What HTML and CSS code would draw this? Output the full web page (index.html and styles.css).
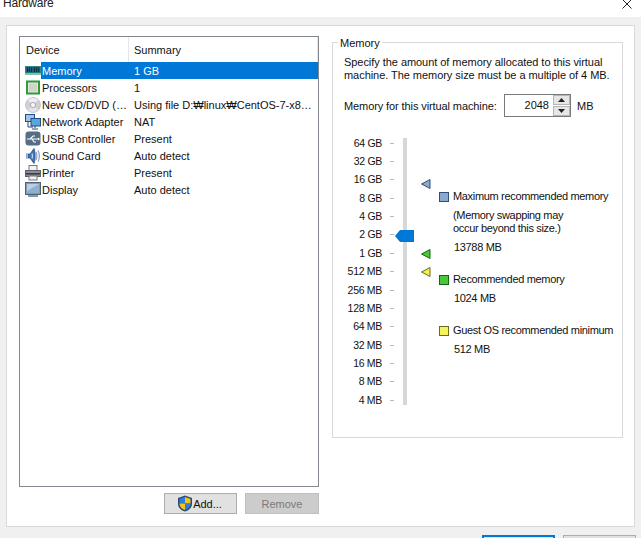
FILE: index.html
```html
<!DOCTYPE html>
<html lang="en">
<head>
<meta charset="utf-8">
<title>Hardware</title>
<link rel="stylesheet" href="styles.css">
</head>
<body>
<div class="window">
  <header class="titlebar">
    <span class="title">Hardware</span>
    <svg class="close" width="10" height="10" viewBox="0 0 10 10"><path d="M0.5 0.5L9.5 9.5M9.5 0.5L0.5 9.5" stroke="#222" stroke-width="1" fill="none"/></svg>
  </header>
  <main class="panel">
    <section class="left">
      <div class="list">
        <div class="list-head">
          <div class="col-device head-cell">Device</div>
          <div class="col-summary head-cell">Summary</div>
        </div>
        <div class="row selected">
          <svg class="ico" viewBox="0 0 16 16"><rect x="0" y="3" width="16" height="9" fill="#2f8a86"/><rect x="1" y="4" width="14" height="5.500" fill="#1d5f78"/><path d="M2.500 4.500v4.500M4.500 4.500v4.500M6.500 4.500v4.500M9.500 4.500v4.500M11.500 4.500v4.500M13.500 4.500v4.500" stroke="#0e3346" stroke-width="1"/><rect x="0" y="10" width="16" height="2" fill="#7fc0a8"/></svg>
          <span class="col-device name">Memory</span><span class="col-summary val">1 GB</span>
        </div>
        <div class="row">
          <svg class="ico" viewBox="0 0 16 16"><rect x="2" y="1.500" width="12" height="12" fill="#e6e6e0" stroke="#2f9a3a" stroke-width="2"/><rect x="4" y="3.500" width="8" height="8" fill="#d2d4ca"/></svg>
          <span class="col-device name">Processors</span><span class="col-summary val">1</span>
        </div>
        <div class="row">
          <svg class="ico" viewBox="0 0 16 16"><circle cx="8" cy="8" r="7.500" fill="#d0d0d6" stroke="#aeaeb4" stroke-width="0.6"/><path d="M8 8L3 3A7 7 0 0 1 13 3Z" fill="#eeeef2"/><path d="M8 8L13 13A7 7 0 0 1 3 13Z" fill="#e2e2e8"/><circle cx="8" cy="8" r="2.600" fill="#f6f6f6" stroke="#9a9a9e" stroke-width="0.8"/></svg>
          <span class="col-device name">New CD/DVD (…</span><span class="col-summary val">Using file D:₩linux₩CentOS-7-x8…</span>
        </div>
        <div class="row">
          <svg class="ico" viewBox="0 0 16 16"><rect x="0.500" y="0.500" width="9" height="7" fill="#9fc4e8" stroke="#1f4f86"/><rect x="6" y="4.500" width="9.500" height="7.500" fill="#5aa4e0" stroke="#1f4f86"/><path d="M3 8v5h5M10 12v2M7 15h6" stroke="#27466c" fill="none"/></svg>
          <span class="col-device name">Network Adapter</span><span class="col-summary val">NAT</span>
        </div>
        <div class="row">
          <svg class="ico" viewBox="0 0 16 16"><rect x="0.500" y="0.500" width="15" height="14" rx="3" fill="#566d88"/><path d="M2 8h11M5 8l3-3h2M7 8l2 3h2" stroke="#fff" stroke-width="1.100" fill="none"/><path d="M13 6.500L15 8l-2 1.500z" fill="#fff"/></svg>
          <span class="col-device name">USB Controller</span><span class="col-summary val">Present</span>
        </div>
        <div class="row">
          <svg class="ico" viewBox="0 0 16 16"><path d="M3 6h2l4-5.500c1.500 3 1.500 12 0 15L5 10H3z" fill="#3f76b8" stroke="#1f3f72" stroke-width="0.7"/><path d="M7 5.500Q8 8 7 10.500" stroke="#c6dcf4" stroke-width="1.200" fill="none"/><path d="M11 4Q12.800 8 11 12M13 2.500Q15.800 8 13 13.500" stroke="#8099b8" stroke-width="1.100" fill="none"/><path d="M2 5Q0.500 8 2 11" stroke="#8099b8" stroke-width="1" fill="none"/></svg>
          <span class="col-device name">Sound Card</span><span class="col-summary val">Auto detect</span>
        </div>
        <div class="row">
          <svg class="ico" viewBox="0 0 16 16"><rect x="4" y="0.500" width="8" height="5" fill="#f4f4f4" stroke="#77797e"/><rect x="0.500" y="5.500" width="15" height="6" fill="#8a8d94" stroke="#5c5f66"/><rect x="1" y="8" width="14" height="1.600" fill="#3b3e44"/><rect x="4" y="11" width="8" height="4" fill="#f2f2f2" stroke="#77797e"/></svg>
          <span class="col-device name">Printer</span><span class="col-summary val">Present</span>
        </div>
        <div class="row">
          <svg class="ico" viewBox="0 0 16 16"><rect x="0.500" y="0.500" width="15" height="12" fill="#7d9cc0" stroke="#4f6172"/><rect x="2" y="2" width="12" height="9" fill="#8fb0cf"/><path d="M2 2h12L2 9z" fill="#b9cfe2"/><rect x="3" y="13" width="10" height="2" fill="#8c98a4"/></svg>
          <span class="col-device name">Display</span><span class="col-summary val">Auto detect</span>
        </div>
      </div>
      <div class="list-actions">
        <button class="btn add" type="button">
          <svg class="shield" width="16" height="17" viewBox="0 0 16 17"><path d="M8 0.500L15 3v6c0 4-3.500 6.500-7 7.500C4.500 15.500 1 13 1 9V3z" fill="#2b4a78"/><path d="M8 2L8 8.500L2.500 8.500L2.500 4z" fill="#2f7fd6"/><path d="M8 2L13.500 4L13.500 8.500L8 8.500z" fill="#f5c21b"/><path d="M2.500 8.500H8V15C5 14 2.500 12 2.500 8.500z" fill="#f5c21b"/><path d="M8 8.500H13.500C13.500 12 11 14 8 15z" fill="#2f7fd6"/></svg>
          <span class="btn-text">Add...</span>
        </button>
        <button class="btn remove" type="button" disabled><span class="btn-text">Remove</span></button>
      </div>
    </section>
    <section class="group">
      <div class="group-title">Memory</div>
      <p class="desc">Specify the amount of memory allocated to this virtual<br>machine. The memory size must be a multiple of 4 MB.</p>
      <div class="mem-row">
        <span class="mem-label">Memory for this virtual machine:</span>
        <div class="spin">
          <span class="spin-val">2048</span>
          <div class="spin-btns">
            <span class="spin-btn"><svg width="7" height="4" viewBox="0 0 7 4"><path d="M3.500 0L7 4H0z" fill="#222"/></svg></span>
            <span class="spin-btn"><svg width="7" height="4" viewBox="0 0 7 4"><path d="M0 0H7L3.500 4z" fill="#222"/></svg></span>
          </div>
        </div>
        <span class="mem-unit">MB</span>
      </div>
      <div class="slider">
        <ul class="ticks">
          <li class="tick"><span class="tick-label">64 GB</span><i class="tick-mark"></i></li>
          <li class="tick"><span class="tick-label">32 GB</span><i class="tick-mark"></i></li>
          <li class="tick"><span class="tick-label">16 GB</span><i class="tick-mark"></i></li>
          <li class="tick"><span class="tick-label">8 GB</span><i class="tick-mark"></i></li>
          <li class="tick"><span class="tick-label">4 GB</span><i class="tick-mark"></i></li>
          <li class="tick"><span class="tick-label">2 GB</span><i class="tick-mark"></i></li>
          <li class="tick"><span class="tick-label">1 GB</span><i class="tick-mark"></i></li>
          <li class="tick"><span class="tick-label">512 MB</span><i class="tick-mark"></i></li>
          <li class="tick"><span class="tick-label">256 MB</span><i class="tick-mark"></i></li>
          <li class="tick"><span class="tick-label">128 MB</span><i class="tick-mark"></i></li>
          <li class="tick"><span class="tick-label">64 MB</span><i class="tick-mark"></i></li>
          <li class="tick"><span class="tick-label">32 MB</span><i class="tick-mark"></i></li>
          <li class="tick"><span class="tick-label">16 MB</span><i class="tick-mark"></i></li>
          <li class="tick"><span class="tick-label">8 MB</span><i class="tick-mark"></i></li>
          <li class="tick"><span class="tick-label">4 MB</span><i class="tick-mark"></i></li>
        </ul>
        <div class="track"></div>
        <svg class="thumb" width="19" height="12" viewBox="0 0 19 12"><path d="M0 6L5 0H19V12H5z" fill="#0078d7"/></svg>
        <svg class="marker marker-max" width="10" height="10" viewBox="0 0 10 10"><path d="M0.500 5L9 0.500V9.500z" fill="#8aa8d0" stroke="#2f4f78"/></svg>
        <svg class="marker marker-rec" width="10" height="10" viewBox="0 0 10 10"><path d="M0.500 5L9 0.500V9.500z" fill="#4cc43c" stroke="#0f6a0f"/></svg>
        <svg class="marker marker-min" width="10" height="10" viewBox="0 0 10 10"><path d="M0.500 5L9 0.500V9.500z" fill="#f2ee4a" stroke="#6a6a20"/></svg>
        <div class="legend">
          <div class="legend-item">
            <div class="legend-head"><i class="swatch swatch-max"></i><span>Maximum recommended memory</span></div>
            <p class="legend-note">(Memory swapping may<br>occur beyond this size.)</p>
            <p class="legend-val">13788 MB</p>
          </div>
          <div class="legend-item">
            <div class="legend-head"><i class="swatch swatch-rec"></i><span>Recommended memory</span></div>
            <p class="legend-val">1024 MB</p>
          </div>
          <div class="legend-item">
            <div class="legend-head"><i class="swatch swatch-min"></i><span>Guest OS recommended minimum</span></div>
            <p class="legend-val">512 MB</p>
          </div>
        </div>
      </div>
    </section>
  </main>
  <footer class="footer">
    <button class="foot-btn primary" type="button"></button>
    <button class="foot-btn" type="button"></button>
  </footer>
</div>
</body>
</html>
```

FILE: styles.css
```css
* { box-sizing: border-box; }
html, body { margin: 0; padding: 0; }
body {
  font-family: "Liberation Sans", sans-serif;
  font-size: 11px;
  line-height: 13px;
  color: #111;
  background: #f0f0f0;
}
p, ul { margin: 0; padding: 0; list-style: none; }
.window {
  width: 641px;
  height: 538px;
  overflow: hidden;
  display: flex;
  flex-direction: column;
  background: #f0f0f0;
}
.titlebar {
  height: 17px;
  flex: none;
  background: #fff;
  display: flex;
  justify-content: space-between;
  padding: 0 9px 0 3px;
  overflow: hidden;
}
.title {
  font-size: 12px;
  line-height: 16px;
  margin-top: -5px;
  letter-spacing: -0.2px;
  color: #222;
}
.close { margin-top: -1px; }
.panel {
  flex: none;
  margin: 8px 6px 0 6px;
  height: 502px;
  width: 629px;
  background: #fff;
  border: 1px solid #d9d9d9;
  display: flex;
  padding: 10px 11px 0 12px;
}
.left { width: 300px; flex: none; display: flex; flex-direction: column; }
.list {
  height: 451px;
  border: 1px solid #828790;
  background: #fff;
}
.list-head { display: flex; height: 25px; }
.head-cell { line-height: 27px; height: 25px; }
.list-head .col-device { width: 109px; padding-left: 6px; border-right: 1px solid #e5e5e5; }
.list-head .col-summary { width: 189px; padding-left: 5px; border-right: 1px solid #e5e5e5; }
.row {
  display: flex;
  align-items: center;
  height: 17px;
  padding-left: 5px;
}
.ico { width: 16px; height: 16px; flex: none; }
.name { width: 88px; flex: none; padding: 1px 0 0 1px; white-space: nowrap; overflow: hidden; }
.val { flex: 1; padding: 1px 0 0 5px; white-space: nowrap; overflow: hidden; }
.selected { background: linear-gradient(to right, #fff 21px, #0078d7 21px); color: #fff; }
.list-actions {
  display: flex;
  justify-content: flex-end;
  gap: 8px;
  margin-top: 6px;
}
.btn {
  height: 21px;
  padding: 0;
  font: inherit;
  display: flex;
  align-items: center;
  justify-content: center;
  border: 1px solid #adadad;
  background: #e1e1e1;
  color: #111;
}
.btn-text { padding-top: 1px; }
.add { width: 73px; }
.remove { width: 74px; background: #cccccc; border-color: #bfbfbf; color: #7a7a7a; }
.shield { flex: none; margin-left: -2px; }
.group {
  position: relative;
  width: 291px;
  height: 396px;
  margin: 6px 0 0 13px;
  border: 1px solid #d9d9d9;
  padding: 13px 0 0 11px;
}
.group-title {
  position: absolute;
  left: 5px;
  top: -6px;
  padding: 0 2px;
  background: #fff;
}
.desc { white-space: nowrap; letter-spacing: -0.05px; }
.mem-row { display: flex; align-items: center; margin-top: 12px; height: 23px; }
.mem-label { width: 160px; flex: none; padding-top: 2px; white-space: nowrap; letter-spacing: -0.1px; }
.spin {
  width: 67px;
  height: 23px;
  border: 1px solid #7a7a7a;
  display: flex;
  justify-content: flex-end;
  align-items: center;
}
.spin-val { margin-right: 4px; }
.spin-btns { width: 17px; height: 21px; display: flex; flex-direction: column; gap: 1px; }
.spin-btn {
  flex: 1;
  background: #e6e6e6;
  border: 1px solid #b5b5b5;
  display: flex;
  align-items: center;
  justify-content: center;
}
.mem-unit { margin-left: 6px; padding-top: 2px; }
.slider {
  position: relative;
  display: flex;
  margin-top: 17px;
}
.ticks { width: 50px; flex: none; }
.tick {
  height: 18.36px;
  display: flex;
  align-items: center;
  white-space: nowrap;
}
.tick-label { width: 38px; text-align: right; flex: none; font-size: 10.5px; letter-spacing: -0.3px; }
.tick-mark { width: 4px; height: 1px; margin-left: 8px; background: #b8b8b8; }
.track {
  flex: none;
  width: 4px;
  height: 267px;
  margin: 4px 0 0 9px;
  background: #d6d6d6;
}
.thumb { position: absolute; left: 51px; top: 96px; }
.marker { position: absolute; left: 77px; }
.marker-max { top: 45px; }
.marker-rec { top: 115px; }
.marker-min { top: 133px; }
.legend { margin: 56px 0 0 32px; flex: none; white-space: nowrap; letter-spacing: -0.33px; }
.legend-item { margin-bottom: 19px; }
.legend-head { display: flex; align-items: center; gap: 4px; height: 13px; }
.swatch { width: 10px; height: 10px; flex: none; border: 1px solid #333; }
.swatch-max { background: #8aa8d0; border-color: #2f4f78; }
.swatch-rec { background: #4cc43c; border-color: #0f6a0f; }
.swatch-min { background: #f6f25a; border-color: #6a6a20; }
.legend-note { margin: 6px 0 0 14px; }
.legend-val { margin: 6px 0 0 15px; }
.footer {
  flex: none;
  display: flex;
  justify-content: flex-end;
  gap: 8px;
  margin-top: 8px;
  padding-right: 5px;
}
.foot-btn {
  width: 73px;
  height: 24px;
  flex: none;
  padding: 0;
  border: 1px solid #adadad;
  background: #e1e1e1;
}
.primary { border: 2px solid #0078d7; background: #e1e1e1; }
```
